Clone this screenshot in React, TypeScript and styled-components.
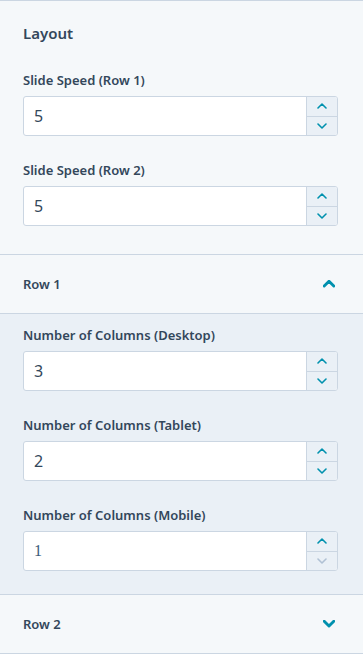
import React from 'react';
import styled, { createGlobalStyle } from 'styled-components';

const GlobalStyle = createGlobalStyle`
  html, body {
    margin: 0;
    padding: 0;
    background: #f5f8fa;
  }
  body {
    font-family: 'Noto Sans', 'Open Sans', sans-serif;
    color: #33475b;
  }
`;

const Panel = styled.div`
  width: 363px;
  height: 654px;
  box-sizing: border-box;
  background: #f5f8fa;
  border-top: 1px solid #cbd6e2;
  display: flex;
  flex-direction: column;
`;

const Section = styled.div<{ $tinted?: boolean }>`
  background: ${p => (p.$tinted ? '#eaf0f6' : '#f5f8fa')};
  padding: ${p => (p.$tinted ? '12px 25px 23px 23px' : '22px 25px 28px 23px')};
  display: flex;
  flex-direction: column;
  gap: 25px;
`;

const Heading = styled.h2`
  margin: 0 0 3px;
  font-size: 15px;
  font-weight: 600;
  color: #33475b;
  line-height: 20px;
`;

const Field = styled.div`
  display: flex;
  flex-direction: column;
  gap: 7px;
`;

const Label = styled.label`
  font-size: 13px;
  font-weight: 600;
  color: #33475b;
  line-height: 18px;
`;

const InputBox = styled.div`
  display: flex;
  height: 40px;
  box-sizing: border-box;
  border: 1px solid #cbd6e2;
  border-radius: 3px;
  background: #fff;
  overflow: hidden;
`;

const Value = styled.div<{ $serif?: boolean }>`
  flex: 1;
  display: flex;
  align-items: center;
  padding-left: 10px;
  font-size: 16px;
  font-family: ${p => (p.$serif ? "'Liberation Serif', serif" : "'Noto Sans', sans-serif")};
  color: ${p => (p.$serif ? '#3b5b7a' : '#33475b')};
`;

const Stepper = styled.div`
  width: 30px;
  display: flex;
  flex-direction: column;
  border-left: 1px solid #cbd6e2;
  background: #eaf0f6;
`;

const StepButton = styled.div<{ $disabled?: boolean }>`
  flex: 1;
  display: flex;
  align-items: center;
  justify-content: center;
  color: ${p => (p.$disabled ? '#b0c1d4' : '#0091ae')};
  & + & {
    border-top: 1px solid #cbd6e2;
  }
`;

const Divider = styled.div`
  height: 1px;
  background: #cbd6e2;
`;

const RowHeader = styled.div`
  height: 58px;
  display: flex;
  align-items: center;
  justify-content: space-between;
  padding: 0 28px 0 23px;
  font-size: 13px;
  font-weight: 600;
  color: #33475b;
`;

const Chevron = ({ up, size = 10, stroke = 1.6 }: { up?: boolean; size?: number; stroke?: number }) => (
  <svg width={size} height={size * 0.6} viewBox="0 0 10 6" fill="none">
    <path
      d={up ? 'M1 5 L5 1 L9 5' : 'M1 1 L5 5 L9 1'}
      stroke="currentColor"
      strokeWidth={stroke}
      strokeLinecap="round"
      strokeLinejoin="round"
    />
  </svg>
);

const ToggleIcon = styled.span`
  color: #0091ae;
  display: flex;
`;

const NumberField = ({ label, value, serif, downDisabled }: { label: string; value: string; serif?: boolean; downDisabled?: boolean }) => (
  <Field>
    <Label>{label}</Label>
    <InputBox>
      <Value $serif={serif}>{value}</Value>
      <Stepper>
        <StepButton><Chevron up /></StepButton>
        <StepButton $disabled={downDisabled}><Chevron /></StepButton>
      </Stepper>
    </InputBox>
  </Field>
);

const App: React.FC = () => (
  <>
    <GlobalStyle />
    <Panel>
      <Section>
        <Heading>Layout</Heading>
        <NumberField label="Slide Speed (Row 1)" value="5" />
        <NumberField label="Slide Speed (Row 2)" value="5" />
      </Section>
      <Divider />
      <RowHeader>
        Row 1
        <ToggleIcon><Chevron up size={12} stroke={2.4} /></ToggleIcon>
      </RowHeader>
      <Divider />
      <Section $tinted>
        <NumberField label="Number of Columns (Desktop)" value="3" />
        <NumberField label="Number of Columns (Tablet)" value="2" />
        <NumberField label="Number of Columns (Mobile)" value="1" serif downDisabled />
      </Section>
      <Divider />
      <RowHeader>
        Row 2
        <ToggleIcon><Chevron size={12} stroke={2.4} /></ToggleIcon>
      </RowHeader>
      <Divider />
    </Panel>
  </>
);

export default App;
